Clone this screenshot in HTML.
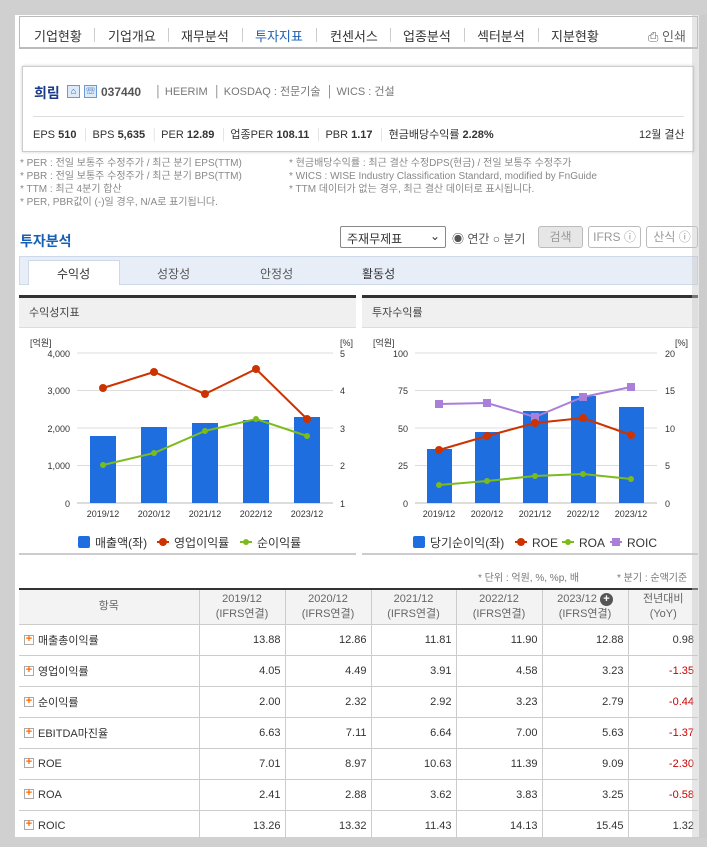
<!DOCTYPE html><html><head><meta charset="utf-8"><style>
*{margin:0;padding:0;box-sizing:border-box}
body{width:707px;height:847px;background:#d0d0d0;position:relative;overflow:hidden;font-family:"Liberation Sans","Noto Sans CJK KR",sans-serif;color:#333}
.a{position:absolute;white-space:nowrap}
.main{position:absolute;left:15px;top:15px;width:684px;height:822px;background:#fff}
.nav{position:absolute;left:19px;top:16px;width:679px;height:33px;border:1px solid #bbb;border-bottom:2px solid #bbb;background:#fff}
.nav span{position:absolute;top:9px;font-size:13px;color:#333}
.nav i{position:absolute;top:11px;width:1px;height:14px;background:#ccc}
.co{position:absolute;left:22px;top:66px;width:672px;height:86px;border:1px solid #ccc;box-shadow:0 0 3px #ccc;background:#fff}
.note{font-size:10px;color:#888}
.sel{position:absolute;left:340px;top:226px;width:106px;height:22px;border:1px solid #888;border-radius:2px;font-size:12px;padding:3px 6px;background:#fff}
.btn{position:absolute;top:226px;height:22px;border:1px solid #bbb;border-radius:3px;font-size:12px;color:#999;text-align:center;line-height:20px;background:#fff}
table{position:absolute;left:19px;top:588px;width:679px;border-collapse:collapse;border-top:2px solid #333;font-size:11px}
td,th{border-bottom:1px solid #ccc;border-left:1px solid #ccc;height:31px;text-align:right;padding-right:4px;color:#333}
th{font-weight:normal;background:#f3f3f3;text-align:center;color:#666;height:35px;padding:0;line-height:15px}
td:first-child,th:first-child{border-left:none}
td:first-child{text-align:left;padding-left:5px}
.p{display:inline-block;width:10px;height:10px;border:1px solid #aaa;vertical-align:-1px;margin-right:4px;position:relative;background:#fff}
.p:after{content:"+";position:absolute;left:0;top:-3px;font-size:11px;font-weight:bold;color:#f60;width:8px;text-align:center}
.r{color:#c00}
</style></head><body>
<div class="main"></div>
<div class="nav">
<span style="left:14px">기업현황</span><i style="left:74px"></i>
<span style="left:88px">기업개요</span><i style="left:148px"></i>
<span style="left:161px">재무분석</span><i style="left:222px"></i>
<span style="left:235px;color:#1a5fb4">투자지표</span><i style="left:296px"></i>
<span style="left:310px">컨센서스</span><i style="left:370px"></i>
<span style="left:383px">업종분석</span><i style="left:444px"></i>
<span style="left:457px">섹터분석</span><i style="left:518px"></i>
<span style="left:531px">지분현황</span>
<span style="left:628px;color:#666">⎙ 인쇄</span>
</div>
<div class="co">
<span class="a" style="left:11px;top:16px;font-size:14px;font-weight:bold;color:#1a3a8a">희림</span>
<span class="a" style="left:44px;top:18px;width:13px;height:13px;border:1px solid #6a9ad4;background:#dfeaf8;font-size:9px;color:#1a5fb4;text-align:center;line-height:11px">⌂</span>
<span class="a" style="left:61px;top:18px;width:13px;height:13px;border:1px solid #6a9ad4;background:#dfeaf8;font-size:9px;color:#1a5fb4;text-align:center;line-height:11px">☏</span>
<span class="a" style="left:78px;top:18px;font-size:12px;font-weight:bold;color:#555">037440</span>
<span class="a" style="left:132px;top:16px;font-size:11px;color:#777">│ HEERIM &nbsp;│ KOSDAQ : 전문기술 &nbsp;│ WICS : 건설</span>
<div class="a" style="left:10px;top:49px;width:651px;height:1px;background:#ddd"></div>
<span class="a" style="left:10px;top:59px;font-size:11px;color:#333">EPS <b>510</b> &nbsp;<span style="color:#ddd">│</span> BPS <b>5,635</b> &nbsp;<span style="color:#ddd">│</span> PER <b>12.89</b> &nbsp;<span style="color:#ddd">│</span> 업종PER <b>108.11</b> &nbsp;<span style="color:#ddd">│</span> PBR <b>1.17</b> &nbsp;<span style="color:#ddd">│</span> 현금배당수익률 <b>2.28%</b></span>
<span class="a" style="left:616px;top:59px;font-size:11px">12월 결산</span>
</div>
<div class="a note" style="left:20px;top:157px;line-height:13px">* PER : 전일 보통주 수정주가 / 최근 분기 EPS(TTM)<br>* PBR : 전일 보통주 수정주가 / 최근 분기 BPS(TTM)<br>* TTM : 최근 4분기 합산<br>* PER, PBR값이 (-)일 경우, N/A로 표기됩니다.</div>
<div class="a note" style="left:289px;top:157px;line-height:13px">* 현금배당수익률 : 최근 결산 수정DPS(현금) / 전일 보통주 수정주가<br>* WICS : WISE Industry Classification Standard, modified by FnGuide<br>* TTM 데이터가 없는 경우, 최근 결산 데이터로 표시됩니다.</div>
<div class="a" style="left:20px;top:231px;font-size:14px;font-weight:bold;color:#1a5fb4">투자분석</div>
<div class="sel">주재무제표<span style="position:absolute;right:5px;top:2px">⌄</span></div>
<span class="a" style="left:452px;top:230px;font-size:12px;color:#555">◉ 연간 ○ 분기</span>
<div class="btn" style="left:538px;width:45px;background:#e6e6e6">검색</div>
<div class="btn" style="left:588px;width:53px">IFRS ⓘ</div>
<div class="btn" style="left:646px;width:52px">산식 ⓘ</div>
<div class="a" style="left:19px;top:256px;width:679px;height:29px;background:#e8eef8;border:1px solid #cdd8e8"></div>
<div class="a" style="left:28px;top:260px;width:92px;height:25px;background:#fff;border:1px solid #cdd8e8;border-bottom:none"></div>
<span class="a" style="left:57px;top:265px;font-size:12px">수익성</span>
<span class="a" style="left:157px;top:265px;font-size:12px;color:#555">성장성</span>
<span class="a" style="left:260px;top:265px;font-size:12px;color:#555">안정성</span>
<span class="a" style="left:362px;top:265px;font-size:12px;color:#333">활동성</span>
<svg class="a" style="left:0;top:0" width="707" height="600" font-family="Liberation Sans,Noto Sans CJK KR,sans-serif">
<rect x="19" y="295" width="337" height="3" fill="#333"/><rect x="19" y="298" width="337" height="29" fill="#f0f0f0"/><rect x="19" y="327" width="337" height="1" fill="#ddd"/>
<rect x="362" y="295" width="336" height="3" fill="#333"/><rect x="362" y="298" width="336" height="29" fill="#f0f0f0"/><rect x="362" y="327" width="336" height="1" fill="#ddd"/>
<rect x="19" y="553" width="337" height="2" fill="#ccc"/><rect x="362" y="553" width="336" height="2" fill="#ccc"/>
<text x="29" y="316" font-size="11" fill="#444">수익성지표</text><text x="372" y="316" font-size="11" fill="#444">투자수익률</text>
<g font-size="9" fill="#333">
<text x="30" y="346">[억원]</text><text x="340" y="346">[%]</text>
<g stroke="#ddd"><line x1="77" y1="353" x2="333" y2="353"/><line x1="77" y1="390.5" x2="333" y2="390.5"/><line x1="77" y1="428" x2="333" y2="428"/><line x1="77" y1="465.5" x2="333" y2="465.5"/></g>
<line x1="77" y1="503" x2="333" y2="503" stroke="#bbb"/>
<g text-anchor="end"><text x="70" y="357">4,000</text><text x="70" y="394">3,000</text><text x="70" y="432">2,000</text><text x="70" y="469">1,000</text><text x="70" y="507">0</text></g>
<text x="340" y="357">5</text><text x="340" y="394">4</text><text x="340" y="432">3</text><text x="340" y="469">2</text><text x="340" y="507">1</text>
<g fill="#1f6ee0"><rect x="90" y="436" width="26" height="67"/><rect x="141" y="427" width="26" height="76"/><rect x="192" y="423" width="26" height="80"/><rect x="243" y="420" width="26" height="83"/><rect x="294" y="417" width="26" height="86"/></g>
<g text-anchor="middle"><text x="103" y="517">2019/12</text><text x="154" y="517">2020/12</text><text x="205" y="517">2021/12</text><text x="256" y="517">2022/12</text><text x="307" y="517">2023/12</text></g>
<polyline points="103,388 154,372 205,394 256,369 307,419" fill="none" stroke="#cc3300" stroke-width="2"/>
<g fill="#cc3300"><circle cx="103" cy="388" r="4"/><circle cx="154" cy="372" r="4"/><circle cx="205" cy="394" r="4"/><circle cx="256" cy="369" r="4"/><circle cx="307" cy="419" r="4"/></g>
<polyline points="103,465 154,453 205,431 256,419 307,436" fill="none" stroke="#7cbb1c" stroke-width="2"/>
<g fill="#7cbb1c"><circle cx="103" cy="465" r="3"/><circle cx="154" cy="453" r="3"/><circle cx="205" cy="431" r="3"/><circle cx="256" cy="419" r="3"/><circle cx="307" cy="436" r="3"/></g>
<text x="373" y="346">[억원]</text><text x="675" y="346">[%]</text>
<g stroke="#ddd"><line x1="415" y1="353" x2="657" y2="353"/><line x1="415" y1="390.5" x2="657" y2="390.5"/><line x1="415" y1="428" x2="657" y2="428"/><line x1="415" y1="465.5" x2="657" y2="465.5"/></g>
<line x1="415" y1="503" x2="657" y2="503" stroke="#bbb"/>
<g text-anchor="end"><text x="408" y="357">100</text><text x="408" y="394">75</text><text x="408" y="432">50</text><text x="408" y="469">25</text><text x="408" y="507">0</text></g>
<text x="665" y="357">20</text><text x="665" y="394">15</text><text x="665" y="432">10</text><text x="665" y="469">5</text><text x="665" y="507">0</text>
<g fill="#1f6ee0"><rect x="427" y="449" width="25" height="54"/><rect x="475" y="432" width="25" height="71"/><rect x="523" y="411" width="25" height="92"/><rect x="571" y="396" width="25" height="107"/><rect x="619" y="407" width="25" height="96"/></g>
<g text-anchor="middle"><text x="439" y="517">2019/12</text><text x="487" y="517">2020/12</text><text x="535" y="517">2021/12</text><text x="583" y="517">2022/12</text><text x="631" y="517">2023/12</text></g>
<polyline points="439,404 487,403 535,417 583,397 631,387" fill="none" stroke="#a97fd8" stroke-width="2"/>
<g fill="#a97fd8"><rect x="435" y="400" width="8" height="8"/><rect x="483" y="399" width="8" height="8"/><rect x="531" y="413" width="8" height="8"/><rect x="579" y="393" width="8" height="8"/><rect x="627" y="383" width="8" height="8"/></g>
<polyline points="439,450 487,436 535,423 583,418 631,435" fill="none" stroke="#cc3300" stroke-width="2"/>
<g fill="#cc3300"><circle cx="439" cy="450" r="4"/><circle cx="487" cy="436" r="4"/><circle cx="535" cy="423" r="4"/><circle cx="583" cy="418" r="4"/><circle cx="631" cy="435" r="4"/></g>
<polyline points="439,485 487,481 535,476 583,474 631,479" fill="none" stroke="#7cbb1c" stroke-width="2"/>
<g fill="#7cbb1c"><circle cx="439" cy="485" r="3"/><circle cx="487" cy="481" r="3"/><circle cx="535" cy="476" r="3"/><circle cx="583" cy="474" r="3"/><circle cx="631" cy="479" r="3"/></g>
</g>
<g font-size="12" fill="#333">
<rect x="78" y="536" width="12" height="12" rx="2" fill="#1f6ee0"/><text x="95" y="547">매출액(좌)</text>
<circle cx="163" cy="542" r="4" fill="#cc3300"/><line x1="157" y1="542" x2="169" y2="542" stroke="#cc3300" stroke-width="2"/><text x="174" y="547">영업이익률</text>
<circle cx="246" cy="542" r="3" fill="#7cbb1c"/><line x1="240" y1="542" x2="252" y2="542" stroke="#7cbb1c" stroke-width="2"/><text x="257" y="547">순이익률</text>
<rect x="413" y="536" width="12" height="12" rx="2" fill="#1f6ee0"/><text x="430" y="547">당기순이익(좌)</text>
<circle cx="521" cy="542" r="4" fill="#cc3300"/><line x1="515" y1="542" x2="527" y2="542" stroke="#cc3300" stroke-width="2"/><text x="532" y="547">ROE</text>
<circle cx="568" cy="542" r="3" fill="#7cbb1c"/><line x1="562" y1="542" x2="574" y2="542" stroke="#7cbb1c" stroke-width="2"/><text x="579" y="547">ROA</text>
<rect x="612" y="538" width="8" height="8" fill="#a97fd8"/><line x1="610" y1="542" x2="622" y2="542" stroke="#a97fd8" stroke-width="2"/><text x="627" y="547">ROIC</text>
</g>
<text x="478" y="581" font-size="10" fill="#777">* 단위 : 억원, %, %p, 배</text><text x="617" y="581" font-size="10" fill="#777">* 분기 : 순액기준</text>
</svg>
<table>
<tr><th style="width:180px">항목</th><th style="width:86px">2019/12<br>(IFRS연결)</th><th style="width:86px">2020/12<br>(IFRS연결)</th><th style="width:85px">2021/12<br>(IFRS연결)</th><th style="width:86px">2022/12<br>(IFRS연결)</th><th style="width:86px">2023/12 <span style="display:inline-block;width:13px;height:13px;border-radius:50%;background:#555;color:#fff;font-size:11px;line-height:13px;font-weight:bold">+</span><br>(IFRS연결)</th><th>전년대비<br>(YoY)</th></tr>
<tr><td><span class="p"></span>매출총이익률</td><td>13.88</td><td>12.86</td><td>11.81</td><td>11.90</td><td>12.88</td><td>0.98</td></tr>
<tr><td><span class="p"></span>영업이익률</td><td>4.05</td><td>4.49</td><td>3.91</td><td>4.58</td><td>3.23</td><td class="r">-1.35</td></tr>
<tr><td><span class="p"></span>순이익률</td><td>2.00</td><td>2.32</td><td>2.92</td><td>3.23</td><td>2.79</td><td class="r">-0.44</td></tr>
<tr><td><span class="p"></span>EBITDA마진율</td><td>6.63</td><td>7.11</td><td>6.64</td><td>7.00</td><td>5.63</td><td class="r">-1.37</td></tr>
<tr><td><span class="p"></span>ROE</td><td>7.01</td><td>8.97</td><td>10.63</td><td>11.39</td><td>9.09</td><td class="r">-2.30</td></tr>
<tr><td><span class="p"></span>ROA</td><td>2.41</td><td>2.88</td><td>3.62</td><td>3.83</td><td>3.25</td><td class="r">-0.58</td></tr>
<tr><td><span class="p"></span>ROIC</td><td>13.26</td><td>13.32</td><td>11.43</td><td>14.13</td><td>15.45</td><td>1.32</td></tr>
</table>
<div class="a" style="left:692px;top:0;width:15px;height:847px;background:#c8c8c8;opacity:.45"></div>
<div class="a" style="left:0;top:0;width:707px;height:15px;background:#d0d0d0"></div>
<div class="a" style="left:15px;top:838px;width:692px;height:9px;background:#d0d0d0"></div>
</body></html>
